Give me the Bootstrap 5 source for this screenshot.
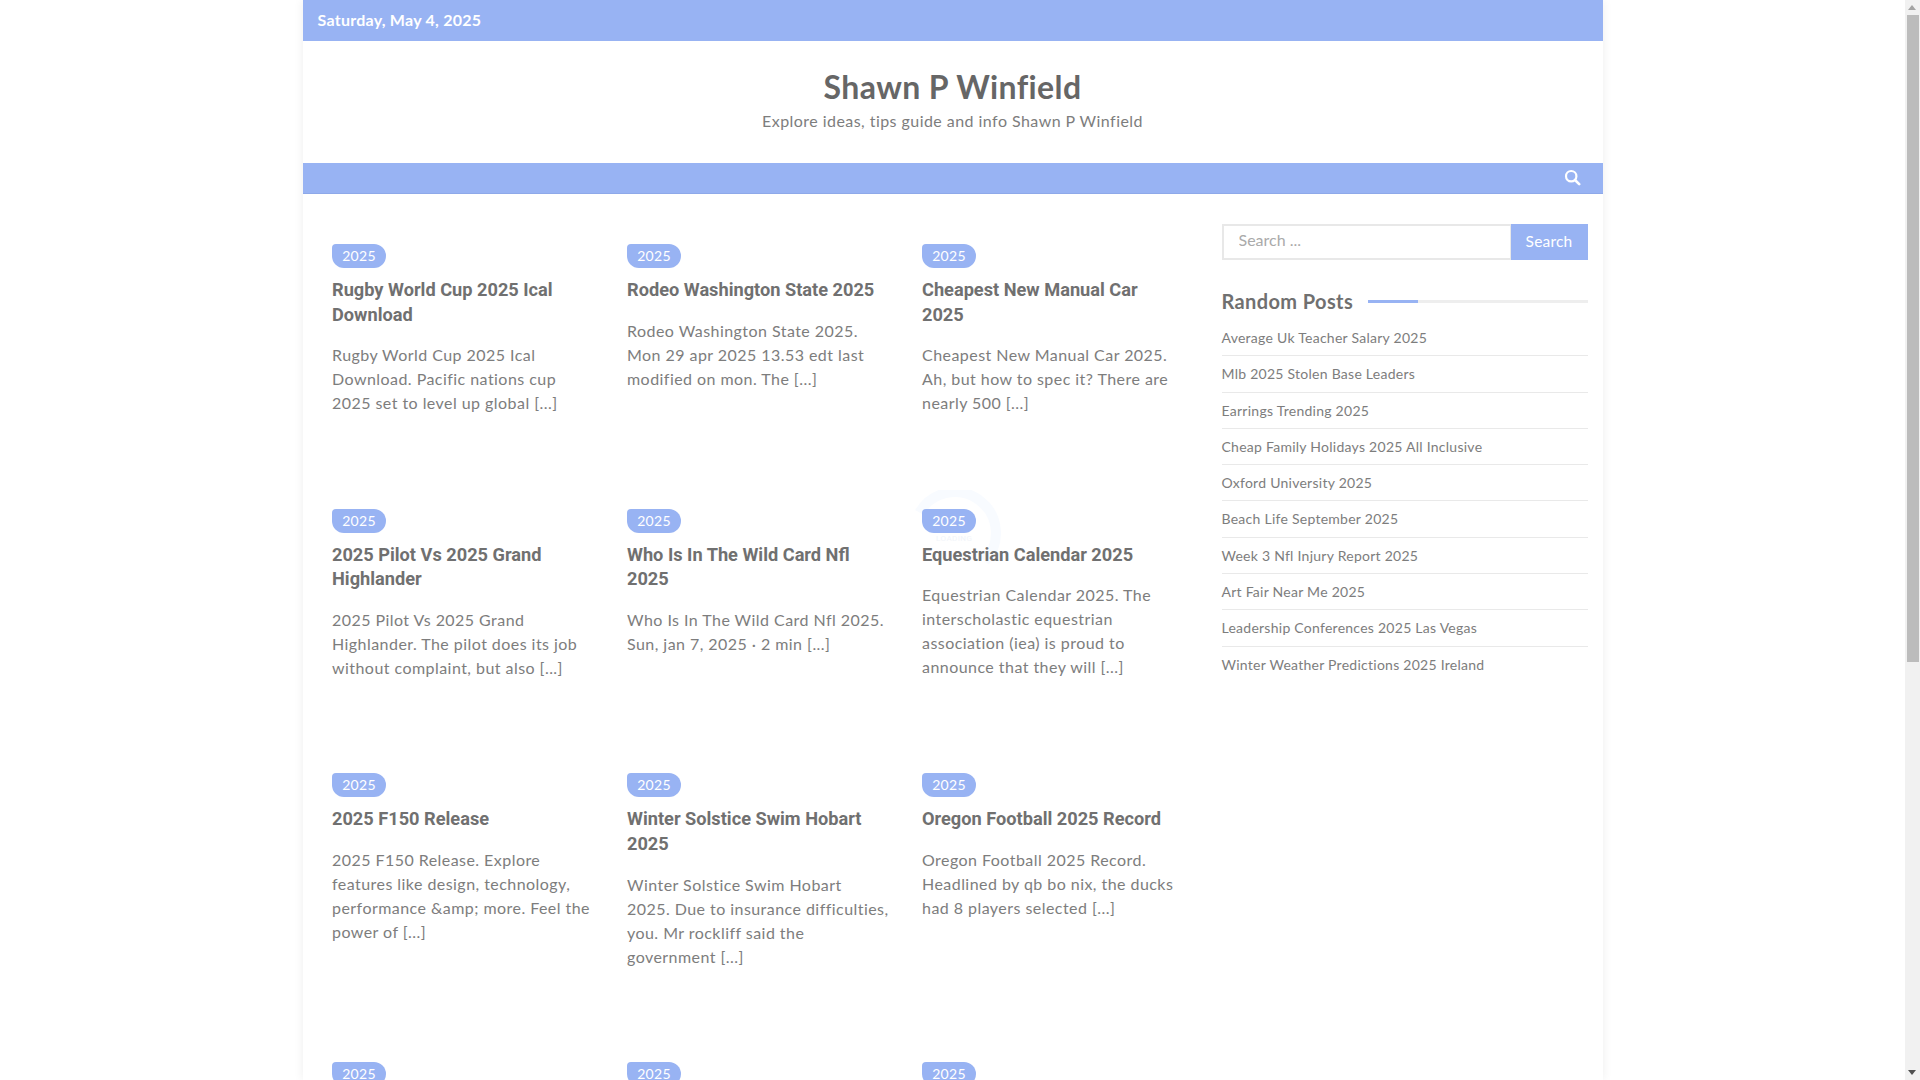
<!DOCTYPE html>
<html lang="en">
<head>
<meta charset="utf-8">
<title>Shawn P Winfield</title>
<link href="https://cdn.jsdelivr.net/npm/bootstrap@5.3.0/dist/css/bootstrap.min.css" rel="stylesheet">
<style>
html,body{height:1080px;overflow:hidden;background:#fff}
body{font-family:"Lato","Liberation Sans",sans-serif;color:#7d7d7d;font-size:16px;letter-spacing:.45px;padding-right:15px}
.site-wrap{width:1300px;height:1080px;margin:0 auto;background:#fff;box-shadow:0 0 10px rgba(0,0,0,.07);overflow:hidden}
.top-strip{height:41px;background:#98b3f3;color:#fff;font-weight:700;font-size:16px;line-height:39px;padding-left:15px;letter-spacing:.25px}
.brand-block{height:122px;padding-top:27px;text-align:center}
.brand-title{font-size:32px;font-weight:700;line-height:38px;color:#666;margin:0 0 3px;letter-spacing:.4px}
.brand-sub{font-size:16px;line-height:24px;color:#7d7d7d;margin:0}
.menu-strip{height:31px;background:#98b3f3;border-bottom:1px solid #8ea9e9;padding:0 22px 2px 0}
.feed{width:904px;padding:50px 0 0 14.5px}
.post-grid{display:grid;grid-template-columns:repeat(3,295px)}
.post-item{width:295px;padding:0 15px 93.3px;position:relative}
.year-tag{display:block;width:54px;height:24px;background:#98b3f3;color:#fff;font-size:14px;line-height:24px;text-align:center;border-radius:4px 12px 12px 12px;position:relative;letter-spacing:.3px}
.post-title{font-family:"Roboto",sans-serif;font-size:18.2px;font-weight:700;line-height:24.7px;color:#707070;margin:10px 0 16px;letter-spacing:0;position:relative}
.post-text{line-height:24px;margin:0}
.loader-ring{position:absolute;left:-2px;top:-19px}
.side-area{width:396px;padding:30px 15px 0 15px}
.find-input{height:36px;border:2px solid #e8e8e8;border-radius:0;font-size:16px;padding:0 15px 5px;box-shadow:none;color:#7d7d7d}
.find-input::placeholder{color:#aaa}
.find-btn{width:77px;height:36px;background:#98b3f3;color:#fff;border:0;border-radius:0;font-size:15.5px;padding:0;letter-spacing:.2px}
.side-head{height:24px;margin:29px 0 7px}
.side-head h2{font-size:20px;font-weight:700;line-height:24px;color:#707070;margin:0;white-space:nowrap;letter-spacing:.38px}
.side-rule{flex:1;height:3px;background:#eee;margin-left:15px}
.side-rule span{display:block;width:50px;height:3px;background:#98b3f3}
.rand-list{list-style:none;margin:0;padding:0;font-size:14px;line-height:21px;letter-spacing:.26px}
.rand-list li{height:36.3px;padding-top:7px;border-bottom:1px solid #e9e9e9}
.rand-list li:last-child{border-bottom:0}
.fake-bar{position:fixed;top:0;right:0;bottom:0;width:15px;background:#f1f1f1}
.fake-thumb{position:absolute;left:2px;right:1px;top:15px;height:647px;background:#bcbcbc}
.fake-up,.fake-down{position:absolute;left:3px;width:0;height:0;border-left:4px solid transparent;border-right:4px solid transparent}
.fake-up{top:5px;border-bottom:5px solid #a3a3a3}
.fake-down{bottom:5px;border-top:5px solid #505050}
</style>
</head>
<body>
<div class="site-wrap">
  <div class="top-strip">Saturday, May 4, 2025</div>
  <header class="brand-block">
    <h1 class="brand-title">Shawn P Winfield</h1>
    <p class="brand-sub">Explore ideas, tips guide and info Shawn P Winfield</p>
  </header>
  <nav class="menu-strip d-flex align-items-center justify-content-end">
    <svg width="17" height="17" viewBox="0 0 17 17" fill="none" stroke="#fff" aria-label="Search"><circle cx="7.2" cy="7.2" r="5.2" stroke-width="2.2"/><path d="M11 11 15.2 15.2" stroke-width="2.6" stroke-linecap="round"/></svg>
  </nav>
  <div class="d-flex">
    <main class="feed">
      <div class="post-grid">
        <article class="post-item"><a class="year-tag text-decoration-none">2025</a><h3 class="post-title">Rugby World Cup 2025 Ical<br>Download</h3><p class="post-text">Rugby World Cup 2025 Ical<br>Download. Pacific nations cup<br>2025 set to level up global [...]</p></article>
        <article class="post-item"><a class="year-tag text-decoration-none">2025</a><h3 class="post-title">Rodeo Washington State 2025</h3><p class="post-text">Rodeo Washington State 2025.<br>Mon 29 apr 2025 13.53 edt last<br>modified on mon. The [...]</p></article>
        <article class="post-item"><a class="year-tag text-decoration-none">2025</a><h3 class="post-title">Cheapest New Manual Car<br>2025</h3><p class="post-text">Cheapest New Manual Car 2025.<br>Ah, but how to spec it? There are<br>nearly 500 [...]</p></article>

        <article class="post-item"><a class="year-tag text-decoration-none">2025</a><h3 class="post-title">2025 Pilot Vs 2025 Grand<br>Highlander</h3><p class="post-text">2025 Pilot Vs 2025 Grand<br>Highlander. The pilot does its job<br>without complaint, but also [...]</p></article>
        <article class="post-item"><a class="year-tag text-decoration-none">2025</a><h3 class="post-title">Who Is In The Wild Card Nfl<br>2025</h3><p class="post-text">Who Is In The Wild Card Nfl 2025.<br>Sun, jan 7, 2025 · 2 min [...]</p></article>
        <article class="post-item">
          <svg class="loader-ring" width="110" height="90" viewBox="0 0 110 90" fill="none"><path d="M14.5 22.5A41 41 0 1 1 80 71" stroke="#f8fbff" stroke-width="10"/><text x="31" y="50.5" font-size="8" fill="#f2f5fa" font-family="Roboto,sans-serif">LOADING</text></svg>
          <a class="year-tag text-decoration-none">2025</a><h3 class="post-title">Equestrian Calendar 2025</h3><p class="post-text">Equestrian Calendar 2025. The<br>interscholastic equestrian<br>association (iea) is proud to<br>announce that they will [...]</p></article>

        <article class="post-item"><a class="year-tag text-decoration-none">2025</a><h3 class="post-title">2025 F150 Release</h3><p class="post-text">2025 F150 Release. Explore<br>features like design, technology,<br>performance &amp;amp; more. Feel the<br>power of [...]</p></article>
        <article class="post-item"><a class="year-tag text-decoration-none">2025</a><h3 class="post-title">Winter Solstice Swim Hobart<br>2025</h3><p class="post-text">Winter Solstice Swim Hobart<br>2025. Due to insurance difficulties,<br>you. Mr rockliff said the<br>government [...]</p></article>
        <article class="post-item"><a class="year-tag text-decoration-none">2025</a><h3 class="post-title">Oregon Football 2025 Record</h3><p class="post-text">Oregon Football 2025 Record.<br>Headlined by qb bo nix, the ducks<br>had 8 players selected [...]</p></article>

        <article class="post-item"><a class="year-tag text-decoration-none">2025</a></article>
        <article class="post-item"><a class="year-tag text-decoration-none">2025</a></article>
        <article class="post-item"><a class="year-tag text-decoration-none">2025</a></article>
      </div>
    </main>
    <aside class="side-area">
      <form class="input-group flex-nowrap">
        <input class="form-control find-input" type="search" placeholder="Search ...">
        <button class="btn find-btn" type="button">Search</button>
      </form>
      <div class="side-head d-flex align-items-center">
        <h2>Random Posts</h2>
        <div class="side-rule"><span></span></div>
      </div>
      <ul class="rand-list">
        <li>Average Uk Teacher Salary 2025</li>
        <li>Mlb 2025 Stolen Base Leaders</li>
        <li>Earrings Trending 2025</li>
        <li>Cheap Family Holidays 2025 All Inclusive</li>
        <li>Oxford University 2025</li>
        <li>Beach Life September 2025</li>
        <li>Week 3 Nfl Injury Report 2025</li>
        <li>Art Fair Near Me 2025</li>
        <li>Leadership Conferences 2025 Las Vegas</li>
        <li>Winter Weather Predictions 2025 Ireland</li>
      </ul>
    </aside>
  </div>
</div>
<div class="fake-bar"><div class="fake-up"></div><div class="fake-thumb"></div><div class="fake-down"></div></div>
<script src="https://cdn.jsdelivr.net/npm/bootstrap@5.3.0/dist/js/bootstrap.bundle.min.js"></script>
</body>
</html>
